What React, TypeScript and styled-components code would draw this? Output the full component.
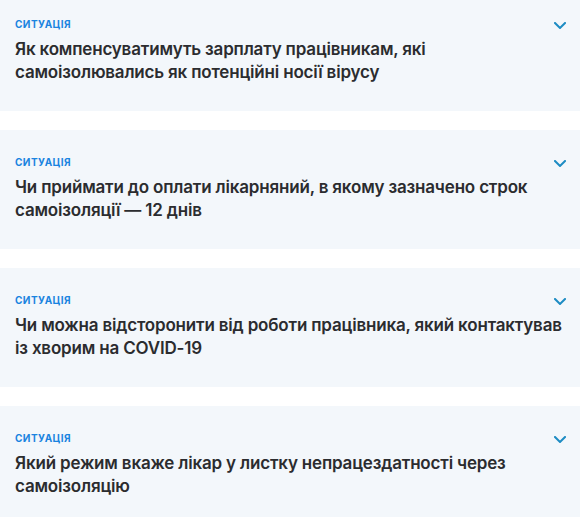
import React from "react";
import styled, { createGlobalStyle } from "styled-components";

const GlobalStyle = createGlobalStyle`
  html, body {
    margin: 0;
    padding: 0;
    background: #ffffff;
    font-family: "Inter", "Liberation Sans", sans-serif;
  }
`;

const List = styled.div`
  display: flex;
  flex-direction: column;
  gap: 19px;
  margin-top: -8px;
`;

const Card = styled.article`
  background: #f3f7fb;
  padding: 25px 14px 27.5px 15px;
  display: flex;
  flex-direction: column;
  gap: 6.5px;
`;

const Header = styled.div`
  display: flex;
  align-items: center;
  justify-content: space-between;
  height: 14px;
`;

const Label = styled.span`
  font-family: "Inter", "Liberation Sans", sans-serif;
  font-size: 10px;
  font-weight: 700;
  line-height: 14px;
  letter-spacing: 0.45px;
  text-transform: uppercase;
  color: #1a84e0;
`;

const Toggle = styled.button`
  display: flex;
  align-items: center;
  justify-content: center;
  width: 12px;
  height: 14px;
  padding: 0;
  margin-top: 2px;
  border: none;
  background: transparent;
  cursor: pointer;
  color: #1d8cc3;
`;

const Title = styled.h3`
  margin: 0;
  font-family: "Inter", "Liberation Sans", sans-serif;
  font-size: 17px;
  font-weight: 600;
  line-height: 23px;
  letter-spacing: -0.18px;
  color: #2b2c2f;
`;

const Chevron = () => (
  <svg width="12" height="7" viewBox="0 0 12 7" fill="none">
    <path d="M1 1l5 5 5-5" stroke="currentColor" strokeWidth="2" strokeLinecap="square" />
  </svg>
);

const items = [
  "Як компенсуватимуть зарплату працівникам, які самоізолювались як потенційні носії вірусу",
  "Чи приймати до оплати лікарняний, в якому зазначено строк самоізоляції — 12 днів",
  "Чи можна відсторонити від роботи працівника, який контактував із хворим на COVID-19",
  "Який режим вкаже лікар у листку непрацездатності через самоізоляцію",
];

export default function App() {
  return (
    <>
      <GlobalStyle />
      <List>
        {items.map((t) => (
          <Card key={t}>
            <Header>
              <Label>Ситуація</Label>
              <Toggle aria-label="Розгорнути">
                <Chevron />
              </Toggle>
            </Header>
            <Title>{t}</Title>
          </Card>
        ))}
      </List>
    </>
  );
}
